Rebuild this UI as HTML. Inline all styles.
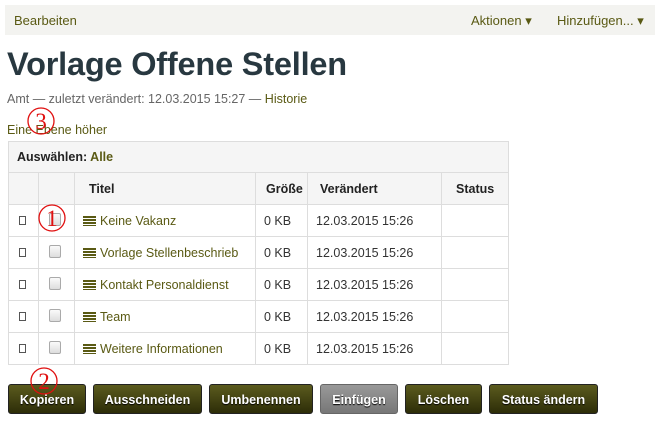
<!DOCTYPE html>
<html><head><meta charset="utf-8"><style>
*{margin:0;padding:0;box-sizing:border-box}
body{width:662px;height:425px;background:#fff;font-family:"Liberation Sans",Arial,sans-serif;font-size:13px;color:#333;position:relative;overflow:hidden}
a{color:#5a5a14;text-decoration:none}
.bar{position:absolute;left:5px;top:5px;width:650px;height:30px;background:#f3f3f0}
.bar span{position:absolute;top:8px;color:#5a5a14;font-size:13px}
h1{position:absolute;left:7px;top:46px;font-size:32.5px;font-weight:bold;color:#283840;letter-spacing:-0.2px}
.meta{position:absolute;left:7px;top:92px;color:#666;font-size:12.5px}
.up{position:absolute;left:7px;top:123px;color:#5a5a14;font-size:12.5px}
table{position:absolute;left:8px;top:141px;border-collapse:collapse;width:501px;table-layout:fixed}
td,th{border:1px solid #ddd;height:32px;font-size:12.5px;text-align:left;padding-left:8px;white-space:nowrap;overflow:hidden}
th{font-weight:bold;color:#222;background:#f5f5f5}
tr.r td{background:#fff}
.cb{display:inline-block;width:7px;height:9px;border:1px solid #555;margin-left:2px}
.ck{display:inline-block;width:12px;height:13px;border:1px solid #aaa;border-radius:2px;background:linear-gradient(#fafafa,#ddd);margin-left:2px}
.ic{display:inline-block;width:13px;height:10px;background:repeating-linear-gradient(#5a5a14 0 2px,transparent 2px 3px);margin-right:4px;vertical-align:-1px}
.btn{position:absolute;top:384px;height:30px;border-radius:3px;background:linear-gradient(#5b5b1e,#2d2d08);color:#fff;font-weight:bold;font-size:12.5px;text-align:center;line-height:30px;border:1px solid #222;text-shadow:0 1px 1px #000}
.btn.g{background:linear-gradient(#999,#777);border-color:#666}
.n{position:absolute}
</style></head><body>
<div class="bar"><span style="left:9px">Bearbeiten</span><span style="left:466px">Aktionen ▾</span><span style="left:552px">Hinzufügen... ▾</span></div>
<h1>Vorlage Offene Stellen</h1>
<div class="meta">Amt — zuletzt verändert: 12.03.2015 15:27 — <a>Historie</a></div>
<div class="up">Eine Ebene höher</div>
<table>
<colgroup><col style="width:30px"><col style="width:36px"><col style="width:181px"><col style="width:52px"><col style="width:134px"><col></colgroup>
<tr><th colspan="6" style="height:31px">Auswählen: <a>Alle</a></th></tr>
<tr><th></th><th></th><th style="padding-left:14px">Titel</th><th style="padding-left:10px">Größe</th><th style="padding-left:12px">Verändert</th><th style="padding-left:14px">Status</th></tr>
<tr class="r"><td><span class="cb"></span></td><td><span class="ck"></span></td><td><span class="ic"></span><a>Keine Vakanz</a></td><td>0 KB</td><td>12.03.2015 15:26</td><td></td></tr>
<tr class="r"><td><span class="cb"></span></td><td><span class="ck"></span></td><td><span class="ic"></span><a>Vorlage Stellenbeschrieb</a></td><td>0 KB</td><td>12.03.2015 15:26</td><td></td></tr>
<tr class="r"><td><span class="cb"></span></td><td><span class="ck"></span></td><td><span class="ic"></span><a>Kontakt Personaldienst</a></td><td>0 KB</td><td>12.03.2015 15:26</td><td></td></tr>
<tr class="r"><td><span class="cb"></span></td><td><span class="ck"></span></td><td><span class="ic"></span><a>Team</a></td><td>0 KB</td><td>12.03.2015 15:26</td><td></td></tr>
<tr class="r"><td><span class="cb"></span></td><td><span class="ck"></span></td><td><span class="ic"></span><a>Weitere Informationen</a></td><td>0 KB</td><td>12.03.2015 15:26</td><td></td></tr>
</table>
<div class="btn" style="left:8px;width:78px">Kopieren</div>
<div class="btn" style="left:93px;width:109px">Ausschneiden</div>
<div class="btn" style="left:209px;width:104px">Umbenennen</div>
<div class="btn g" style="left:320px;width:78px">Einfügen</div>
<div class="btn" style="left:405px;width:77px">Löschen</div>
<div class="btn" style="left:489px;width:109px">Status ändern</div>
<svg class="n" style="left:0;top:0" width="662" height="425">
<g fill="none" stroke="#e01010" stroke-width="1.3"><circle cx="41" cy="121" r="13"/><circle cx="52" cy="218" r="13"/><circle cx="44" cy="381" r="13"/></g>
<g fill="#e01010" font-family="Liberation Serif,serif" font-size="23" text-anchor="middle"><text x="41" y="129">3</text><text x="52" y="226">1</text><text x="44" y="389">2</text></g>
</svg>
</body></html>
